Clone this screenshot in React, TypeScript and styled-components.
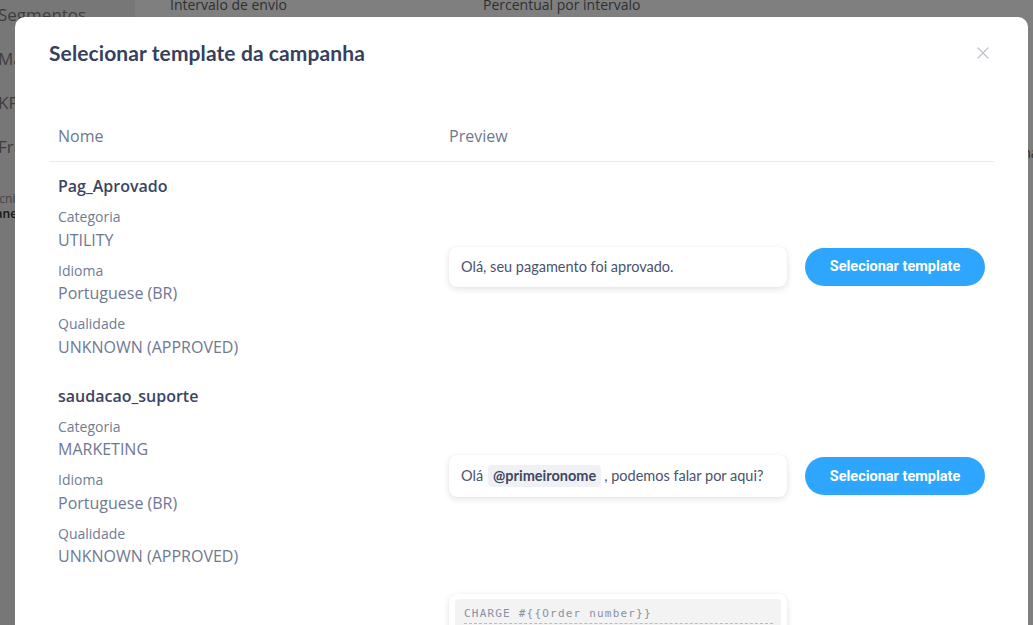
import React from "react";
import styled, { createGlobalStyle } from "styled-components";

const GlobalStyle = createGlobalStyle`
  html, body { margin: 0; padding: 0; overflow: hidden; }
  body { font-family: "Open Sans", "Noto Sans", sans-serif; background: #ffffff; }
  * { box-sizing: border-box; }
`;

const Page = styled.div`
  display: flex;
  width: 1033px;
  height: 625px;
  overflow: hidden;
`;

const Sidebar = styled.aside`
  width: 135px;
  flex: none;
  background: #efefef;
  padding-top: 4px;
  display: flex;
  flex-direction: column;
`;

const SideItem = styled.div`
  height: 44px;
  line-height: 22px;
  font-size: 17px;
  color: #7d7d7d;
  margin-left: -2px;
  white-space: nowrap;
`;

const SideSmall = styled.div<{ $dark?: boolean }>`
  font-size: 12px;
  line-height: 15px;
  white-space: nowrap;
  margin-left: ${(p) => (p.$dark ? "-8px" : "-14px")};
  margin-top: ${(p) => (p.$dark ? "0" : "11px")};
  color: ${(p) => (p.$dark ? "#2f2f2f" : "#8a8a8a")};
  font-weight: ${(p) => (p.$dark ? 600 : 400)};
`;

const Main = styled.main`
  flex: 1;
  display: grid;
  grid-template-columns: 313px 1fr;
  align-content: start;
  padding: 0 0 0 35px;
  margin-top: -5px;
`;

const FieldLabel = styled.div`
  font-size: 14px;
  line-height: 20px;
  color: #5f5f5f;
`;

const EdgeLabel = styled(FieldLabel)`
  grid-column: 2;
  justify-self: end;
  margin-top: 128px;
  margin-right: -22px;
`;

const Overlay = styled.div`
  position: fixed;
  inset: 0;
  background: rgba(0, 0, 0, 0.5);
  padding: 17px 5px 0 15px;
  display: flex;
  flex-direction: column;
`;

const Modal = styled.div`
  flex: 1;
  background: #ffffff;
  border-radius: 10px 10px 0 0;
  padding: 24px 34px 0 34px;
  overflow: hidden;
`;

const ModalHeader = styled.div`
  display: flex;
  align-items: center;
  justify-content: space-between;
  margin-bottom: 46px;
`;

const Title = styled.h2`
  margin: 0;
  font-family: "Lato", "Open Sans", sans-serif;
  font-weight: 700;
  font-size: 21px;
  line-height: 24px;
  color: #363f5e;
  letter-spacing: 0.1px;
`;

const CloseButton = styled.button`
  border: 0;
  background: none;
  padding: 0;
  margin-right: 5px;
  width: 12px;
  height: 12px;
  display: flex;
  align-items: center;
  justify-content: center;
  cursor: pointer;
`;

const Table = styled.table`
  width: 100%;
  border-collapse: collapse;
  table-layout: fixed;
`;

const Th = styled.th<{ $w?: number }>`
  text-align: left;
  font-weight: 400;
  font-size: 16px;
  line-height: 24px;
  color: #6d7891;
  padding: 13px 9px;
  border-bottom: 1px solid #e8e9ec;
  width: ${(p) => (p.$w ? `${p.$w}px` : "auto")};
`;

const Td = styled.td`
  padding: 13px 9px 13px;
  vertical-align: middle;
`;

const Name = styled.div`
  font-size: 16px;
  font-weight: 600;
  line-height: 22px;
  color: #3b4562;
  margin-bottom: 10px;
`;

const MetaLabel = styled.div`
  font-size: 14px;
  line-height: 20px;
  color: #727b96;
`;

const MetaValue = styled.div`
  font-size: 16px;
  line-height: 24px;
  color: #6f7893;
  margin: 0.5px 0 9px;
  &:last-child { margin-bottom: 0; }
`;

const PreviewCell = styled.div`
  display: flex;
  align-items: center;
  gap: 18px;
`;

const Card = styled.div`
  width: 338px;
  flex: none;
  background: #ffffff;
  border-radius: 8px;
  box-shadow: 0 2px 6px rgba(40, 50, 80, 0.14), 0 0 1px rgba(40, 50, 80, 0.08);
  padding: 10px 12px;
  font-family: "Lato", "Open Sans", sans-serif;
  font-size: 14.5px;
  line-height: 20px;
  color: #4a5370;
  display: flex;
  align-items: center;
  flex-wrap: wrap;
`;

const ReceiptCard = styled(Card)`
  padding: 5px 6px 6px;
  display: block;
`;

const Chip = styled.span`
  background: #f0f1f4;
  border-radius: 4px;
  padding: 0 5px;
  margin: 0 3px 0 5px;
  font-weight: 700;
  color: #3e4763;
  line-height: 22px;
`;

const Receipt = styled.div`
  background: #f3f3f4;
  border-radius: 4px;
  padding: 7px 8px 10px 9px;
  font-family: "DejaVu Sans Mono", "Liberation Mono", monospace;
  font-size: 11px;
  letter-spacing: 1.2px;
  line-height: 16px;
  color: #8b90a1;
`;

const ReceiptLine = styled.div<{ $sep?: boolean }>`
  white-space: pre;
  ${(p) => (p.$sep ? "border-bottom: 1px dashed #b7bbc7; padding-bottom: 1px; margin-bottom: 6px;" : "")}
`;

const SelectButton = styled.button`
  flex: none;
  width: 180px;
  height: 38px;
  border: 0;
  border-radius: 19px;
  background: #2ea6fd;
  color: #ffffff;
  font-family: "Roboto", "Liberation Sans", sans-serif;
  font-weight: 700;
  font-size: 14.5px;
  letter-spacing: 0;
  cursor: pointer;
`;

type Template = {
  name: string;
  category: string;
  language: string;
  quality: string;
  preview: React.ReactNode;
  receipt?: boolean;
};

const templates: Template[] = [
  {
    name: "Pag_Aprovado",
    category: "UTILITY",
    language: "Portuguese (BR)",
    quality: "UNKNOWN (APPROVED)",
    preview: "Olá, seu pagamento foi aprovado.",
  },
  {
    name: "saudacao_suporte",
    category: "MARKETING",
    language: "Portuguese (BR)",
    quality: "UNKNOWN (APPROVED)",
    preview: (
      <>
        Olá<Chip>@primeironome</Chip>, podemos falar por aqui?
      </>
    ),
  },
  {
    name: "confirmacao_pedido",
    category: "UTILITY",
    language: "Portuguese (BR)",
    quality: "UNKNOWN (APPROVED)",
    preview: null,
    receipt: true,
  },
];

const receiptLines = [
  "Item             {{Item}}",
  "Quantidade       {{Qtd}}",
  "Valor            {{Valor}}",
  "Frete            {{Frete}}",
  "Desconto         {{Desconto}}",
  "",
  "Total            {{Total}}",
  "",
  "Pagamento        {{Forma}}",
  "Status           {{Status}}",
  "Data             {{Data}}",
  "",
  "Obrigado pela sua compra!",
];

const CloseIcon = () => (
  <svg width="12" height="12" viewBox="0 0 12 12" aria-hidden="true">
    <path d="M1 1 L11 11 M11 1 L1 11" stroke="#c0c4ce" strokeWidth="1.4" strokeLinecap="round" />
  </svg>
);

export default function App() {
  return (
    <>
      <GlobalStyle />
      <Page>
        <Sidebar>
          <SideItem>Segmentos</SideItem>
          <SideItem>Mailing</SideItem>
          <SideItem>KPIs</SideItem>
          <SideItem>Frases</SideItem>
          <SideSmall>Técnico</SideSmall>
          <SideSmall $dark>Janeiro</SideSmall>
        </Sidebar>
        <Main>
          <FieldLabel>Intervalo de envio</FieldLabel>
          <FieldLabel>Percentual por intervalo</FieldLabel>
          <EdgeLabel>Semana</EdgeLabel>
        </Main>
      </Page>
      <Overlay>
        <Modal>
          <ModalHeader>
            <Title>Selecionar template da campanha</Title>
            <CloseButton aria-label="Fechar">
              <CloseIcon />
            </CloseButton>
          </ModalHeader>
          <Table>
            <thead>
              <tr>
                <Th $w={391}>Nome</Th>
                <Th>Preview</Th>
              </tr>
            </thead>
            <tbody>
              {templates.map((t) => (
                <tr key={t.name}>
                  <Td>
                    <Name>{t.name}</Name>
                    <MetaLabel>Categoria</MetaLabel>
                    <MetaValue>{t.category}</MetaValue>
                    <MetaLabel>Idioma</MetaLabel>
                    <MetaValue>{t.language}</MetaValue>
                    <MetaLabel>Qualidade</MetaLabel>
                    <MetaValue>{t.quality}</MetaValue>
                  </Td>
                  <Td>
                    <PreviewCell>
                      {t.receipt ? (
                        <ReceiptCard>
                          <Receipt>
                            <ReceiptLine $sep>CHARGE #{"{{Order number}}"}</ReceiptLine>
                            {receiptLines.map((l, i) => (
                              <ReceiptLine key={i}>{l || " "}</ReceiptLine>
                            ))}
                          </Receipt>
                        </ReceiptCard>
                      ) : (
                        <Card>{t.preview}</Card>
                      )}
                      <SelectButton>Selecionar template</SelectButton>
                    </PreviewCell>
                  </Td>
                </tr>
              ))}
            </tbody>
          </Table>
        </Modal>
      </Overlay>
    </>
  );
}
